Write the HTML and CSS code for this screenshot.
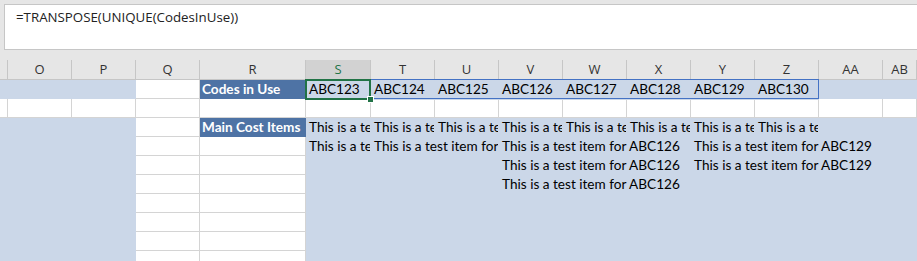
FILE: index.html
```html
<!DOCTYPE html>
<html lang="en">

<head>
    <meta charset="UTF-8">
    <meta name="viewport" content="width=device-width, initial-scale=1.0">
    <title>Codes in Use</title>
    <link rel="stylesheet" href="styles.css">
</head>

<body>
    <div class="formula-bar">
        <div class="formula-box">=TRANSPOSE(UNIQUE(CodesInUse))</div>
    </div>

    <div class="sheet">
        <!-- column headers -->
        <div class="head stub"></div>
        <div class="head">O</div>
        <div class="head">P</div>
        <div class="head">Q</div>
        <div class="head">R</div>
        <div class="head active">S</div>
        <div class="head">T</div>
        <div class="head">U</div>
        <div class="head">V</div>
        <div class="head">W</div>
        <div class="head">X</div>
        <div class="head">Y</div>
        <div class="head">Z</div>
        <div class="head">AA</div>
        <div class="head">AB</div>

        <!-- row 1 -->
        <div class="cell fill span3"></div>
        <div class="cell"></div>
        <div class="cell title">Codes in Use</div>
        <div class="spill span8">
            <div class="cell fill selected">ABC123</div>
            <div class="cell fill">ABC124</div>
            <div class="cell fill">ABC125</div>
            <div class="cell fill">ABC126</div>
            <div class="cell fill">ABC127</div>
            <div class="cell fill">ABC128</div>
            <div class="cell fill">ABC129</div>
            <div class="cell fill">ABC130</div>
        </div>
        <div class="cell fill span2"></div>

        <!-- row 2 -->
        <div class="cell"></div>
        <div class="cell"></div>
        <div class="cell"></div>
        <div class="cell"></div>
        <div class="cell"></div>
        <div class="cell"></div>
        <div class="cell"></div>
        <div class="cell"></div>
        <div class="cell"></div>
        <div class="cell"></div>
        <div class="cell"></div>
        <div class="cell"></div>
        <div class="cell"></div>
        <div class="cell"></div>
        <div class="cell"></div>

        <!-- row 3 -->
        <div class="cell fill span3"></div>
        <div class="cell"></div>
        <div class="cell title">Main Cost Items</div>
        <div class="cell fill">This is a test item for ABC123</div>
        <div class="cell fill">This is a test item for ABC124</div>
        <div class="cell fill">This is a test item for ABC125</div>
        <div class="cell fill">This is a test item for ABC126</div>
        <div class="cell fill">This is a test item for ABC127</div>
        <div class="cell fill">This is a test item for ABC128</div>
        <div class="cell fill">This is a test item for ABC129</div>
        <div class="cell fill">This is a test item for ABC130</div>
        <div class="cell fill span2"></div>

        <!-- row 4 -->
        <div class="cell fill span3"></div>
        <div class="cell"></div>
        <div class="cell"></div>
        <div class="cell fill">This is a test item for ABC123</div>
        <div class="cell fill span2">This is a test item for ABC124</div>
        <div class="cell fill span3">This is a test item for ABC126</div>
        <div class="cell fill span4">This is a test item for ABC129</div>

        <!-- row 5 -->
        <div class="cell fill span3"></div>
        <div class="cell"></div>
        <div class="cell"></div>
        <div class="cell fill span3"></div>
        <div class="cell fill span3">This is a test item for ABC126</div>
        <div class="cell fill span4">This is a test item for ABC129</div>

        <!-- row 6 -->
        <div class="cell fill span3"></div>
        <div class="cell"></div>
        <div class="cell"></div>
        <div class="cell fill span3"></div>
        <div class="cell fill span3">This is a test item for ABC126</div>
        <div class="cell fill span4"></div>

        <!-- rows 7 - 10 -->
        <div class="cell fill span3"></div>
        <div class="cell"></div>
        <div class="cell"></div>
        <div class="cell fill span10"></div>

        <div class="cell fill span3"></div>
        <div class="cell"></div>
        <div class="cell"></div>
        <div class="cell fill span10"></div>

        <div class="cell fill span3"></div>
        <div class="cell"></div>
        <div class="cell"></div>
        <div class="cell fill span10"></div>

        <div class="cell fill span3"></div>
        <div class="cell"></div>
        <div class="cell"></div>
        <div class="cell fill span10"></div>
    </div>
</body>

</html>
```

FILE: styles.css
```css
body {
    margin: 0;
    padding: 0;
    background-color: #ffffff;
    overflow: hidden;
}

.formula-bar {
    height: 60px;
    box-sizing: border-box;
    padding: 4px 0 0 4px;
    background-color: #e6e6e6;
}

.formula-box {
    height: 46px;
    box-sizing: border-box;
    padding: 3px 0 0 11px;
    background-color: #ffffff;
    border: 1px solid #c6c6c6;
    border-right: none;
    font-family: "Open Sans", sans-serif;
    font-size: 13.3px;
    color: #222222;
}

.sheet {
    display: grid;
    grid-template-columns: 8px 64px 64px 64px 106px 65px repeat(8, 64px) 1fr;
    grid-template-rows: 20px;
    grid-auto-rows: 19px;
    height: 201px;
    overflow: hidden;
    font-family: Lato, sans-serif;
    font-size: 13.6px;
}

.head {
    box-sizing: border-box;
    background-color: #e6e6e6;
    border-right: 1px solid #c6c6c6;
    border-bottom: 1px solid #c6c6c6;
    text-align: center;
    line-height: 19px;
    font-family: "Open Sans", sans-serif;
    font-size: 13px;
    color: #333333;
}

.head.active {
    background-color: #d2d2d2;
    color: #217346;
}

.cell {
    box-sizing: border-box;
    border-right: 1px solid #d4d4d4;
    border-bottom: 1px solid #d4d4d4;
    padding-left: 3px;
    line-height: 19px;
    white-space: nowrap;
    overflow: hidden;
    color: #000000;
}

.cell.fill {
    background-color: #cbd7e8;
    border-color: transparent;
}

.cell.title {
    background-color: #4e73a5;
    border-color: #4e73a5;
    color: #ffffff;
    font-weight: bold;
    padding-left: 2px;
}

.span2 { grid-column: span 2; }
.span3 { grid-column: span 3; }
.span4 { grid-column: span 4; }
.span8 { grid-column: span 8; }
.span10 { grid-column: span 10; }

/* spilled dynamic array range S1:Z1 */
.spill {
    display: grid;
    grid-template-columns: 65px repeat(7, 64px);
    position: relative;
}

.spill::after {
    content: "";
    position: absolute;
    left: 0;
    top: -1px;
    right: 0;
    bottom: 0;
    border: 1px solid #4472c4;
    pointer-events: none;
}

.selected {
    position: relative;
    overflow: visible;
    z-index: 2;
}

.selected::after {
    content: "";
    position: absolute;
    left: -1px;
    top: -1px;
    right: -1px;
    bottom: -1px;
    border: 2px solid #217346;
}

.selected::before {
    content: "";
    position: absolute;
    right: -4px;
    bottom: -4px;
    width: 5px;
    height: 5px;
    background-color: #217346;
    border: 1px solid #ffffff;
    z-index: 3;
}
```
